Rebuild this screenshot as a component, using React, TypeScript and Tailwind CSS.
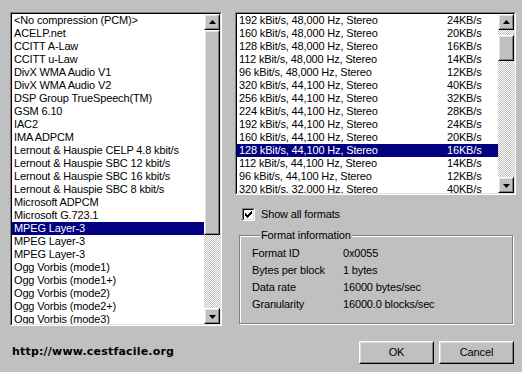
import React from "react";

const leftItems = [
  "<No compression (PCM)>",
  "ACELP.net",
  "CCITT A-Law",
  "CCITT u-Law",
  "DivX WMA Audio V1",
  "DivX WMA Audio V2",
  "DSP Group TrueSpeech(TM)",
  "GSM 6.10",
  "IAC2",
  "IMA ADPCM",
  "Lernout & Hauspie CELP 4.8 kbit/s",
  "Lernout & Hauspie SBC 12 kbit/s",
  "Lernout & Hauspie SBC 16 kbit/s",
  "Lernout & Hauspie SBC 8 kbit/s",
  "Microsoft ADPCM",
  "Microsoft G.723.1",
  "MPEG Layer-3",
  "MPEG Layer-3",
  "MPEG Layer-3",
  "Ogg Vorbis (mode1)",
  "Ogg Vorbis (mode1+)",
  "Ogg Vorbis (mode2)",
  "Ogg Vorbis (mode2+)",
  "Ogg Vorbis (mode3)",
];

const rightItems: [string, string][] = [
  ["192 kBit/s, 48,000 Hz, Stereo", "24KB/s"],
  ["160 kBit/s, 48,000 Hz, Stereo", "20KB/s"],
  ["128 kBit/s, 48,000 Hz, Stereo", "16KB/s"],
  ["112 kBit/s, 48,000 Hz, Stereo", "14KB/s"],
  ["96 kBit/s, 48,000 Hz, Stereo", "12KB/s"],
  ["320 kBit/s, 44,100 Hz, Stereo", "40KB/s"],
  ["256 kBit/s, 44,100 Hz, Stereo", "32KB/s"],
  ["224 kBit/s, 44,100 Hz, Stereo", "28KB/s"],
  ["192 kBit/s, 44,100 Hz, Stereo", "24KB/s"],
  ["160 kBit/s, 44,100 Hz, Stereo", "20KB/s"],
  ["128 kBit/s, 44,100 Hz, Stereo", "16KB/s"],
  ["112 kBit/s, 44,100 Hz, Stereo", "14KB/s"],
  ["96 kBit/s, 44,100 Hz, Stereo", "12KB/s"],
  ["320 kBit/s, 32,000 Hz, Stereo", "40KB/s"],
];

function Raised({ className = "", children }: { className?: string; children?: React.ReactNode }) {
  return (
    <div className={`border border-t-white border-l-white border-r-black border-b-black ${className}`}>
      <div className="w-full h-full border border-t-[#dfdfdf] border-l-[#dfdfdf] border-r-[#808080] border-b-[#808080] bg-[#c0c0c0] flex items-center justify-center">
        {children}
      </div>
    </div>
  );
}

function Arrow({ down = false }: { down?: boolean }) {
  return (
    <svg width="7" height="4" viewBox="0 0 7 4" className={down ? "mt-[1px]" : "mb-[1px]"}>
      {down ? <path d="M0 0H7L3.5 4Z" fill="#000" /> : <path d="M3.5 0L7 4H0Z" fill="#000" />}
    </svg>
  );
}

function ScrollBar({ thumbTop, thumbHeight }: { thumbTop: number; thumbHeight: number }) {
  return (
    <div className="w-[16px] h-full flex flex-col shrink-0">
      <Raised className="w-[16px] h-[16px] shrink-0">
        <Arrow />
      </Raised>
      <div className="flex-1 bg-[repeating-conic-gradient(#c0c0c0_0_25%,#ffffff_0_50%)] bg-[length:2px_2px] flex flex-col">
        <div style={{ height: thumbTop }} className="shrink-0" />
        <Raised className="w-[16px] shrink-0">
          <div style={{ height: thumbHeight - 4 }} />
        </Raised>
      </div>
      <Raised className="w-[16px] h-[16px] shrink-0">
        <Arrow down />
      </Raised>
    </div>
  );
}

function Sunken({ className = "", children }: { className?: string; children?: React.ReactNode }) {
  return (
    <div className={`border border-t-[#808080] border-l-[#808080] border-r-white border-b-white ${className}`}>
      <div className="w-full h-full border border-t-black border-l-black border-r-[#dfdfdf] border-b-[#dfdfdf] bg-white flex overflow-hidden">
        {children}
      </div>
    </div>
  );
}

export default function App() {
  const font = { fontFamily: '"Liberation Sans", Arial, sans-serif' };
  return (
    <div
      className="w-[522px] h-[372px] bg-[#c0c0c0] text-black text-[11px] tracking-[-0.15px] flex flex-col pt-[12px] overflow-hidden"
      style={font}
    >
      <div className="flex pl-[10px]">
        <Sunken className="w-[212px] h-[314px] shrink-0">
          <div className="flex-1 overflow-hidden">
            {leftItems.map((t, i) => (
              <div
                key={i}
                className={`h-[13px] leading-[13px] pl-[2px] whitespace-nowrap ${
                  i === 16 ? "bg-[#000080] text-white" : ""
                }`}
              >
                {t}
              </div>
            ))}
          </div>
          <ScrollBar thumbTop={0} thumbHeight={205} />
        </Sunken>

        <div className="ml-[13px] w-[281px] flex flex-col">
          <Sunken className="w-[281px] h-[183px]">
            <div className="flex-1 overflow-hidden">
              {rightItems.map(([a, b], i) => (
                <div
                  key={i}
                  className={`h-[13px] leading-[13px] pl-[2px] grid grid-cols-[208px_1fr] whitespace-nowrap ${
                    i === 10 ? "bg-[#000080] text-white" : ""
                  }`}
                >
                  <span>{a}</span>
                  <span>{b}</span>
                </div>
              ))}
            </div>
            <ScrollBar thumbTop={5} thumbHeight={26} />
          </Sunken>

          <div className="flex items-center mt-[13px] ml-[7px] h-[13px]">
            <div className="w-[13px] h-[13px] border border-t-[#808080] border-l-[#808080] border-r-white border-b-white">
              <div className="w-full h-full border border-t-black border-l-black border-r-[#dfdfdf] border-b-[#dfdfdf] bg-white flex items-center justify-center">
                <svg width="7" height="7" viewBox="0 0 7 7">
                  <path d="M0 2h1v1h1v1h1V3h1V2h1V1h1V0h1v3H6v1H5v1H4v1H3v1H2V6H1V5H0Z" fill="#000" />
                </svg>
              </div>
            </div>
            <span className="ml-[6px] leading-[13px]">Show all formats</span>
          </div>

          <fieldset className="mt-[8px] ml-[4px] w-[274px] border border-[#808080] shadow-[inset_1px_1px_0_#fff,1px_1px_0_#fff] pl-[12px] pb-[10px]">
            <legend className="ml-[8px] px-[1px] bg-[#c0c0c0] leading-[13px]">Format information</legend>
            <div className="grid grid-cols-[91px_1fr] auto-rows-[17px] items-center mt-[3px]">
              <span>Format ID</span>
              <span>0x0055</span>
              <span>Bytes per block</span>
              <span>1 bytes</span>
              <span>Data rate</span>
              <span>16000 bytes/sec</span>
              <span>Granularity</span>
              <span>16000.0 blocks/sec</span>
            </div>
          </fieldset>
        </div>
      </div>

      <div className="flex items-center mt-[15px] pl-[12px] pr-[8px]">
        <span
          className="font-bold text-[11px] tracking-[0.2px] text-[#000]"
          style={{ fontFamily: '"DejaVu Sans", Verdana, sans-serif' }}
        >
          http://www.cestfacile.org
        </span>
        <div className="ml-auto flex gap-[5px]">
          <Raised className="w-[75px] h-[23px]">
            <span>OK</span>
          </Raised>
          <Raised className="w-[75px] h-[23px]">
            <span>Cancel</span>
          </Raised>
        </div>
      </div>
    </div>
  );
}
